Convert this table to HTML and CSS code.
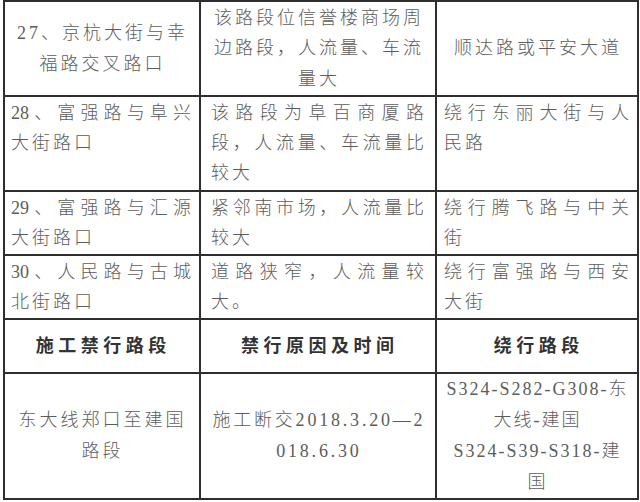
FILE: index.html
```html
<!DOCTYPE html>
<html lang="zh-CN">
<head>
<meta charset="utf-8">
<title>禁行路段</title>
<link rel="stylesheet" href="styles.css">
</head>
<body>
<table class="grid">
  <colgroup>
    <col class="c1">
    <col class="c2">
    <col class="c3">
  </colgroup>
  <tr class="r1 mid">
    <td class="k1"><span class="ln">27、京杭大街与幸</span><span class="ln">福路交叉路口</span></td>
    <td class="k2"><span class="ln">该路段位信誉楼商场周</span><span class="ln">边路段，人流量、车流</span><span class="ln">量大</span></td>
    <td class="k3"><span class="ln">顺达路或平安大道</span></td>
  </tr>
  <tr class="r2 top">
    <td class="k1"><span class="fl">28、富强路与阜兴</span><span class="ll">大街路口</span></td>
    <td class="k2"><span class="fl">该路段为阜百商厦路</span><span class="fl">段，人流量、车流量比</span><span class="ll">较大</span></td>
    <td class="k3"><span class="fl">绕行东丽大街与人</span><span class="ll">民路</span></td>
  </tr>
  <tr class="r3 top">
    <td class="k1"><span class="fl">29、富强路与汇源</span><span class="ll">大街路口</span></td>
    <td class="k2"><span class="fl">紧邻南市场，人流量比</span><span class="ll">较大</span></td>
    <td class="k3"><span class="fl">绕行腾飞路与中关</span><span class="ll">街</span></td>
  </tr>
  <tr class="r4 top">
    <td class="k1"><span class="fl">30、人民路与古城</span><span class="ll">北街路口</span></td>
    <td class="k2"><span class="fl">道路狭窄，人流量较</span><span class="ll">大。</span></td>
    <td class="k3"><span class="fl">绕行富强路与西安</span><span class="ll">大街</span></td>
  </tr>
  <tr class="r5 mid head">
    <td class="k1"><span class="ln">施工禁行路段</span></td>
    <td class="k2"><span class="ln">禁行原因及时间</span></td>
    <td class="k3"><span class="ln">绕行路段</span></td>
  </tr>
  <tr class="r6 mid">
    <td class="k1"><span class="ln">东大线郑口至建国</span><span class="ln">路段</span></td>
    <td class="k2"><span class="ln num wide">施工断交2018.3.20—2</span><span class="ln num wide">018.6.30</span></td>
    <td class="k3"><span class="ln num">S324-S282-G308-东</span><span class="ln num">大线-建国</span><span class="ln num">S324-S39-S318-建</span><span class="ln num">国</span></td>
  </tr>
</table>
</body>
</html>
```

FILE: styles.css
```css
html, body {
  margin: 0;
  padding: 0;
  background: #ffffff;
}

body {
  padding: 0 0 0 3px;
  font-family: "Liberation Serif", "Noto Sans CJK SC", serif;
  font-size: 18px;
  font-weight: 300;
  color: #5c5c5c;
}

.grid {
  border-collapse: collapse;
  table-layout: fixed;
  width: 634px;
  border: 2px solid #2e2e2e;
}

.c1 { width: 196px; }
.c2 { width: 236px; }
.c3 { width: 202px; }

.grid td {
  border: 2px solid #2e2e2e;
  line-height: 31px;
  padding: 0;
  white-space: nowrap;
}

.k1 { padding: 0 8px 0 6px !important; }
.k2 { padding: 0 11px 0 10px !important; }
.k3 { padding: 0 8px 0 7px !important; }

.r1 { height: 95px; }
.r2 { height: 95px; }
.r3 { height: 64px; }
.r4 { height: 64px; }
.r5 { height: 54px; }
.r6 { height: 126px; }

.mid td {
  vertical-align: middle;
  text-align: center;
}

.r1 td {
  line-height: 30.5px;
}

.top td {
  vertical-align: top;
  line-height: 30px;
  padding-top: 1px !important;
}

.ln {
  display: block;
  letter-spacing: 3px;
  margin-right: -3px;
}

.fl {
  display: block;
  text-align: justify;
  text-align-last: justify;
  text-justify: inter-character;
}

.ll {
  display: block;
  text-align: left;
  letter-spacing: 3px;
}

.head td {
  color: #333333;
  font-weight: 700;
}

.head .ln {
  letter-spacing: 4.5px;
  margin-right: -4.5px;
}

.num {
  letter-spacing: 2px;
  margin-right: -2px;
}

.wide {
  letter-spacing: 2.8px;
  margin-right: -2.8px;
}
```
